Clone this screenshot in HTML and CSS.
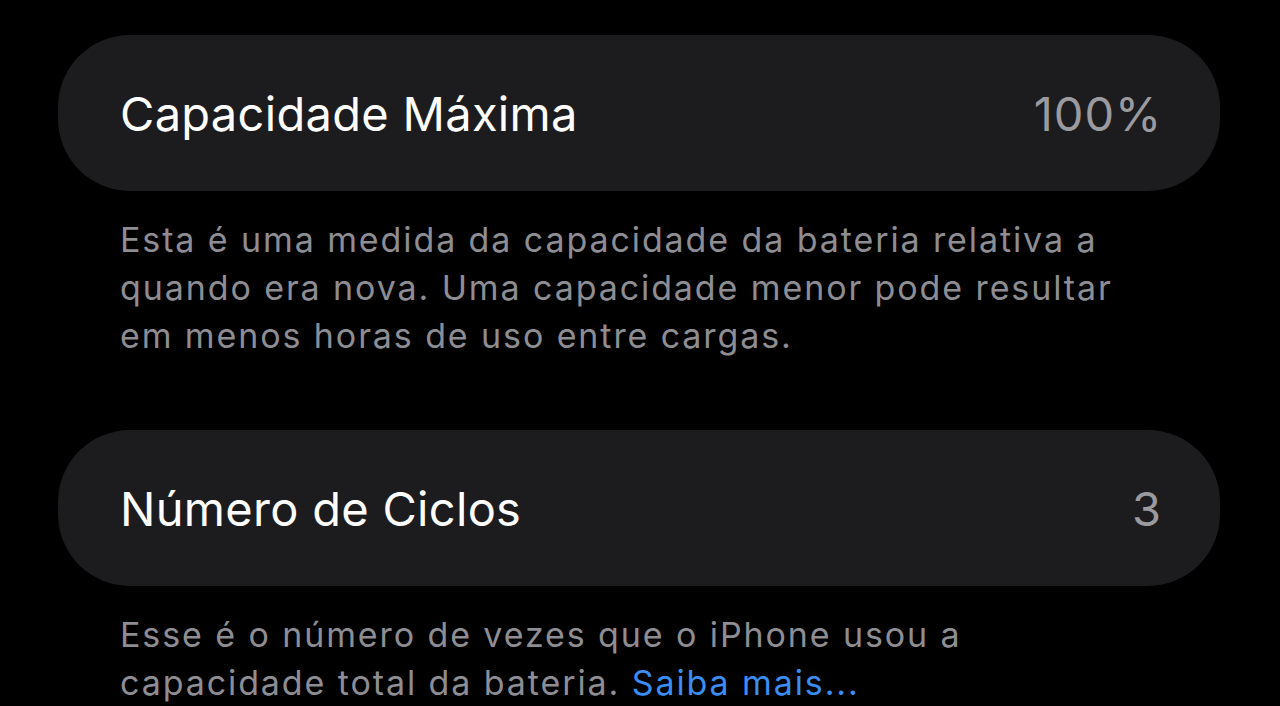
FILE: index.html
```html
<!DOCTYPE html>
<html lang="pt">
<head>
<meta charset="utf-8">
<link rel="stylesheet" href="styles.css">
</head>
<body>
<main class="page">
  <section class="group first">
    <div class="cell">
      <span class="label">Capacidade Máxima</span>
      <span class="value">100%</span>
    </div>
    <p class="footer">Esta é uma medida da capacidade da bateria relativa a<br>quando era nova. Uma capacidade menor pode resultar<br>em menos horas de uso entre cargas.</p>
  </section>
  <section class="group second">
    <div class="cell">
      <span class="label">Número de Ciclos</span>
      <span class="value">3</span>
    </div>
    <p class="footer">Esse é o número de vezes que o iPhone usou a<br>capacidade total da bateria. <a class="link" href="#">Saiba mais...</a></p>
  </section>
</main>
</body>
</html>
```

FILE: styles.css
```css
html, body {
  margin: 0;
  padding: 0;
  background: #000;
  height: 706px;
  overflow: hidden;
}
body {
  font-family: Inter, "Noto Sans", "Liberation Sans", sans-serif;
  -webkit-font-smoothing: antialiased;
}
.page {
  padding: 35px 60px 0 58px;
}
.group.second {
  margin-top: 70px;
}
.cell {
  height: 156px;
  background: #1c1c1e;
  border-radius: 72px;
  display: flex;
  align-items: center;
  justify-content: space-between;
  padding: 0 58px 0 62px;
  box-sizing: border-box;
}
.label {
  color: #ffffff;
  font-size: 47px;
  letter-spacing: 0.3px;
}
.value {
  color: #9a9a9f;
  font-size: 47px;
  letter-spacing: 0.9px;
}
.footer {
  margin: 25px 0 0 0;
  padding-left: 62px;
  color: #8d8d93;
  font-size: 34px;
  line-height: 48px;
  letter-spacing: 1.9px;
}
.link {
  color: #3a8df2;
  text-decoration: none;
}
```
